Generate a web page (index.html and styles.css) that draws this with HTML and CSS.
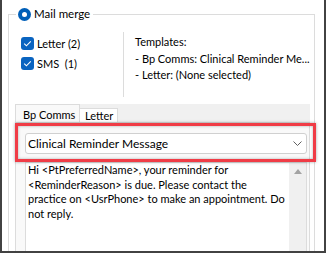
FILE: index.html
```html
<!DOCTYPE html>
<html>
<head>
<meta charset="utf-8">
<link rel="stylesheet" href="styles.css">
</head>
<body>
<div class="window">
  <div class="group">
    <div class="legend">
      <span class="radio"><span class="dot"></span></span>
      <span class="legend-text">Mail merge</span>
    </div>
    <div class="top">
      <div class="checks">
        <div class="check-row">
          <span class="checkbox"><svg width="13" height="13" viewBox="0 0 13 13"><path d="M3.2 6.6 L5.4 8.8 L9.8 4.3" fill="none" stroke="#fff" stroke-width="1.1"/></svg></span>
          <span class="label">Letter (2)</span>
        </div>
        <div class="check-row">
          <span class="checkbox"><svg width="13" height="13" viewBox="0 0 13 13"><path d="M3.2 6.6 L5.4 8.8 L9.8 4.3" fill="none" stroke="#fff" stroke-width="1.1"/></svg></span>
          <span class="label">SMS&nbsp; (1)</span>
        </div>
      </div>
      <div class="templates">
        <div>Templates:</div>
        <div>- Bp Comms: Clinical Reminder Me...</div>
        <div>- Letter: (None selected)</div>
      </div>
    </div>
    <div class="tabs">
      <div class="tabstrip">
        <div class="tab tab-active">Bp Comms</div>
        <div class="tab tab-inactive">Letter</div>
      </div>
      <div class="page">
        <div class="combo">
          <span class="combo-text">Clinical Reminder Message</span>
          <svg class="chevron" width="9" height="5" viewBox="0 0 9 5"><path d="M0.5 0.5 L4.5 4.5 L8.5 0.5" fill="none" stroke="#606060" stroke-width="1"/></svg>
        </div>
        <div class="textarea">
          <div class="text">Hi &lt;PtPreferredName&gt;, your reminder for<br>&lt;ReminderReason&gt; is due. Please contact the<br>practice on &lt;UsrPhone&gt; to make an appointment. Do<br>not reply.</div>
          <div class="scroll"><span class="arrow"></span></div>
        </div>
        <div class="highlight"></div>
      </div>
    </div>
  </div>
</div>
</body>
</html>
```
FILE: styles.css
```css
html, body {
  margin: 0;
  padding: 0;
  background: #fff;
}
.window {
  width: 326px;
  height: 253px;
  box-sizing: border-box;
  border-left: 2px solid #424242;
  border-right: 2px solid #424242;
  border-bottom: 2px solid #424242;
  padding: 14px 9px 0 6px;
  overflow: hidden;
  font-family: Lato, "Liberation Sans", sans-serif;
  font-size: 11px;
  color: #000;
  background: #fff;
}
.group {
  position: relative;
  border: 1px solid #dcdcdc;
  border-bottom: none;
  height: 260px;
  padding: 0 4px 0 6px;
}
.legend {
  position: absolute;
  left: 7px;
  top: -9px;
  height: 16px;
  padding: 0 3px 0 2px;
  background: #fff;
  display: flex;
  align-items: center;
  gap: 3px;
  line-height: 16px;
}
.radio {
  width: 13px;
  height: 13px;
  border-radius: 50%;
  background: #005fb8;
  display: flex;
  align-items: center;
  justify-content: center;
}
.dot {
  width: 5px;
  height: 5px;
  border-radius: 50%;
  background: #fff;
}
.legend-text {
  font-size: 11.5px;
}
.top {
  display: flex;
  height: 89px;
}
.checks {
  flex-shrink: 0;
  margin-left: 6px;
  margin-top: 22px;
  width: 102px;
}
.check-row {
  display: flex;
  align-items: center;
  height: 13px;
  margin-bottom: 7px;
  gap: 3px;
}
.checkbox {
  width: 13px;
  height: 13px;
  border-radius: 3px;
  background: #0a64c0;
  display: block;
}
.checkbox svg {
  display: block;
}
.label {
  line-height: 13px;
}
.templates {
  margin-top: 17px;
  height: 63px;
  border-left: 1px solid #dcdcdc;
  padding: 2px 0 0 11px;
  line-height: 16.5px;
  white-space: nowrap;
  overflow: hidden;
}
.tabs {
  width: 295px;
}
.tabstrip {
  display: flex;
  align-items: flex-end;
  height: 18px;
  background: #f0f0f0;
}
.tab {
  box-sizing: border-box;
  border: 1px solid #dcdcdc;
  border-bottom: none;
  white-space: nowrap;
}
.tab-active {
  width: 65px;
  height: 19px;
  margin-bottom: -1px;
  padding: 1px 0 0 7px;
  line-height: 17px;
  background: #f9f9f9;
  position: relative;
}
.tab-inactive {
  height: 14px;
  padding: 0 4px 0 5px;
  line-height: 14px;
  border-left: none;
  background: #fff;
}
.page {
  position: relative;
  border: 1px solid #dcdcdc;
  border-bottom: none;
  background: #f9f9f9;
  padding: 10px 2px 0 9px;
  height: 140px;
}
.combo {
  box-sizing: border-box;
  height: 21px;
  border: 1px solid #d0d0d0;
  border-radius: 3px;
  background: #fff;
  display: flex;
  align-items: center;
  justify-content: space-between;
  padding: 0 4px 0 2px;
  font-size: 12px;
}
.combo-text {
  line-height: 19px;
}
.chevron {
  display: block;
}
.textarea {
  margin-top: 8px;
  display: flex;
  border: 1px solid #dcdcdc;
  border-bottom: none;
  background: #fff;
  height: 110px;
}
.text {
  flex: 1;
  padding: 0 0 0 2px;
  line-height: 14.5px;
  white-space: nowrap;
  overflow: hidden;
}
.scroll {
  width: 17px;
  background: #f0f0f0;
  display: flex;
  justify-content: center;
  padding-top: 6px;
  box-sizing: border-box;
}
.arrow {
  width: 0;
  height: 0;
  border-left: 4px solid transparent;
  border-right: 4px solid transparent;
  border-bottom: 5px solid #a3a3a3;
}
.highlight {
  position: absolute;
  left: -1px;
  top: 0;
  width: 301px;
  height: 39px;
  box-sizing: border-box;
  border: 3px solid #f03c46;
  box-shadow: 0 0 3px rgba(0, 0, 0, 0.35), inset 0 0 3px rgba(0, 0, 0, 0.3);
  pointer-events: none;
}
```
